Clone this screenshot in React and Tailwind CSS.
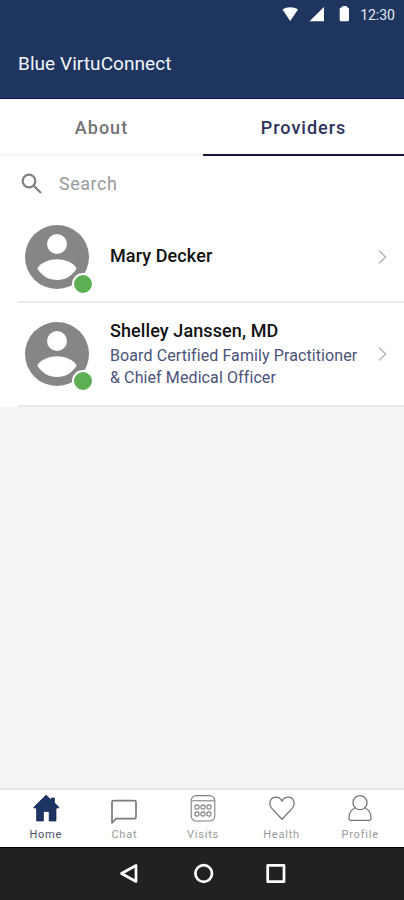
import React from "react";

const providers = [
  {
    name: "Mary Decker",
    lines: [],
    row: "h-[90px]",
  },
  {
    name: "Shelley Janssen, MD",
    lines: ["Board Certified Family Practitioner", "& Chief Medical Officer"],
    row: "h-[104px]",
  },
];

const HomeIcon = () => (
  <svg width="26" height="28" viewBox="0 0 26 28" fill="#1d3563">
    <path
      d="M13 1.2 L18.4 6 V4 H21.4 V8.8 L25.6 13 V14 H23 V27 H16.2 V17.5 H10.4 V27 H3.6 V14 H1 V13 Z"
      stroke="#131c55"
      strokeWidth="0.7"
    />
  </svg>
);

const ChatIcon = () => (
  <svg
    width="26"
    height="28"
    viewBox="0 0 26 28"
    fill="none"
    stroke="#7a7a7a"
    strokeWidth="1.7"
    strokeLinejoin="round"
    overflow="visible"
  >
    <path d="M1 28.8 V8.2 Q1 6.7 2.5 6.7 H23.5 Q25 6.7 25 8.2 V23.2 Q25 24.7 23.5 24.7 H5 Z" />
  </svg>
);

const VisitsIcon = () => (
  <svg
    width="26"
    height="28"
    viewBox="0 0 26 28"
    fill="none"
    stroke="#808080"
    strokeWidth="1.1"
  >
    <rect x="1.2" y="1.6" width="23.6" height="25.4" rx="5" />
    <path d="M1.6 6.8 H24.4" />
    <circle cx="7" cy="13" r="2.1" />
    <circle cx="13" cy="13" r="2.1" />
    <circle cx="19" cy="13" r="2.1" />
    <circle cx="7" cy="20" r="2.1" />
    <circle cx="13" cy="20" r="2.1" />
    <circle cx="19" cy="20" r="2.1" />
  </svg>
);

const HealthIcon = () => (
  <svg
    width="26"
    height="28"
    viewBox="0 0 26 28"
    fill="none"
    stroke="#777"
    strokeWidth="1.3"
    strokeLinejoin="round"
  >
    <path d="M13 25.3 L2.8 14.4 C-1 10 1.2 3.2 6.8 3.2 C9.8 3.2 12 5 13 7.2 C14 5 16.2 3.2 19.2 3.2 C24.8 3.2 27 10 23.2 14.4 Z" />
  </svg>
);

const ProfileIcon = () => (
  <svg
    width="26"
    height="28"
    viewBox="0 0 26 28"
    fill="none"
    stroke="#777"
    strokeWidth="1.3"
    strokeLinejoin="round"
  >
    <circle cx="13" cy="8.7" r="7" />
    <path d="M8 14 C4.5 15.6 2 19 2 23.5 V24.6 Q2 26.4 3.8 26.4 H22.2 Q24 26.4 24 24.6 V23.5 C24 19 21.5 15.6 18 14" />
  </svg>
);

const navItems = [
  { title: "Home", icon: HomeIcon, color: "text-[#4a5068]" },
  { title: "Chat", icon: ChatIcon, color: "text-[#9a9a9a]" },
  { title: "Visits", icon: VisitsIcon, color: "text-[#9a9a9a]" },
  { title: "Health", icon: HealthIcon, color: "text-[#9a9a9a]" },
  { title: "Profile", icon: ProfileIcon, color: "text-[#9a9a9a]" },
];

const Avatar = () => (
  <div className="relative w-16 h-16 shrink-0">
    <svg width="64" height="64" viewBox="0 0 64 64">
      <circle cx="32" cy="32" r="32" fill="#868686" />
      <circle cx="32" cy="19" r="10" fill="#fff" />
      <path
        d="M12.3 43.6 C16 37 25 34.3 32 34.3 C39 34.3 48 37 51.7 43.6 C47 51.5 40 55 32 55 C24 55 17 51.5 12.3 43.6 Z"
        fill="#fff"
      />
    </svg>
    {/* Online badge */}
    <span className="absolute left-[47px] top-12 w-[22px] h-[22px] rounded-full bg-[#5cb053] border-2 border-white" />
  </div>
);

const StatusBar = () => (
  <div className="flex justify-end h-[30px] pr-[9px] pt-[5px]">
    <svg
      className="mr-px"
      width="77"
      height="20"
      viewBox="0 0 77 20"
      fill="#fff"
    >
      <path d="M0.5 4.6 C5 1.4 11.5 1.4 16 4.6 L8.2 16 Z" />
      <path d="M42 2 V16.3 H27.5 Z" />
      <path d="M59.5 2.5 Q60 1 61 1 H64 Q65 1 65.5 2.5 Q67 2.8 67 4 V15 Q67 16.3 65.7 16.3 H59 Q57.7 16.3 57.7 15 V4 Q57.7 2.8 59.5 2.5 Z" />
    </svg>
    <span className="text-sm leading-5 text-[#e4e8f0]">12:30</span>
  </div>
);

const Header = () => (
  <header className="h-[99px] bg-[#1e365f] border-b border-[#0d1250]">
    <StatusBar />
    <h1 className="px-[18px] pt-[21px] text-[19px] leading-[26px] tracking-[0.06px] text-[#f3f5f9]">
      Blue VirtuConnect
    </h1>
  </header>
);

const Tabs = () => (
  <div className="flex h-[57px] text-lg font-medium tracking-[1px] text-center leading-[57px]">
    <div className="w-[203px] border-b-2 border-[#f5f5f5] text-[#737373]">
      About
    </div>
    <div className="flex-1 border-b-2 border-[#161638] text-[#2c335c]">
      Providers
    </div>
  </div>
);

const ProviderRow = ({ provider }) => (
  <div
    className={`flex items-center ml-[18px] pl-[7px] pr-[17px] border-b-2 border-[#ebebeb] ${provider.row}`}
  >
    <Avatar />
    <div className="flex-1 ml-[21px] pb-[3px] whitespace-nowrap">
      <p className="text-lg leading-7 tracking-[0.1px] font-medium text-[#111]">
        {provider.name}
      </p>
      {provider.lines.map((line) => (
        <p
          className="text-base leading-[22px] tracking-[0.1px] text-[#4a5278]"
          key={line}
        >
          {line}
        </p>
      ))}
    </div>
    <svg width="9" height="16" viewBox="0 0 9 16" fill="none">
      <path d="M1 1.5 L7.6 8 L1 14.5" stroke="#bcbcbc" strokeWidth="1.7" />
    </svg>
  </div>
);

const BottomNav = () => (
  <nav className="grid grid-cols-5 h-[59px] pl-[7px] pr-1 pt-1 bg-white border-t-2 border-[#e6e6e6]">
    {navItems.map((item) => (
      <div className="flex flex-col items-center pr-px" key={item.title}>
        <item.icon />
        <span
          className={`mt-1.5 text-[11px] leading-[14px] tracking-[0.8px] ${item.color}`}
        >
          {item.title}
        </span>
      </div>
    ))}
  </nav>
);

const SystemBar = () => (
  <div className="h-[53px] bg-[#212121] border-t border-black">
    <svg
      className="mx-auto"
      width="404"
      height="52"
      viewBox="0 0 404 52"
      fill="none"
      stroke="#fff"
      strokeWidth="2.7"
      strokeLinejoin="round"
    >
      <path d="M121.5 25.5 L136 17.5 V33.5 Z" />
      <circle cx="203.7" cy="25.5" r="8.3" />
      <rect x="267.7" y="17.4" width="16.3" height="16.3" />
    </svg>
  </div>
);

const App = () => {
  return (
    <div className="flex flex-col w-[404px] h-[900px] overflow-hidden bg-[#f5f5f5] font-['Roboto',sans-serif]">
      <Header />
      <main className="flex-1">
        <section className="bg-white">
          <Tabs />
          {/* Search */}
          <div className="flex items-center h-14 pl-[21px] mb-px">
            <svg
              width="22"
              height="22"
              viewBox="0 0 22 22"
              fill="none"
              stroke="#808080"
              strokeWidth="2.2"
            >
              <circle cx="8" cy="8" r="6.3" />
              <path d="M12.5 12.5 L20 20" />
            </svg>
            <span className="ml-4 text-lg tracking-[0.5px] text-[#9a9a9a]">
              Search
            </span>
          </div>
          {providers.map((provider) => (
            <ProviderRow provider={provider} key={provider.name} />
          ))}
        </section>
      </main>
      <BottomNav />
      <SystemBar />
    </div>
  );
};

export default App;
